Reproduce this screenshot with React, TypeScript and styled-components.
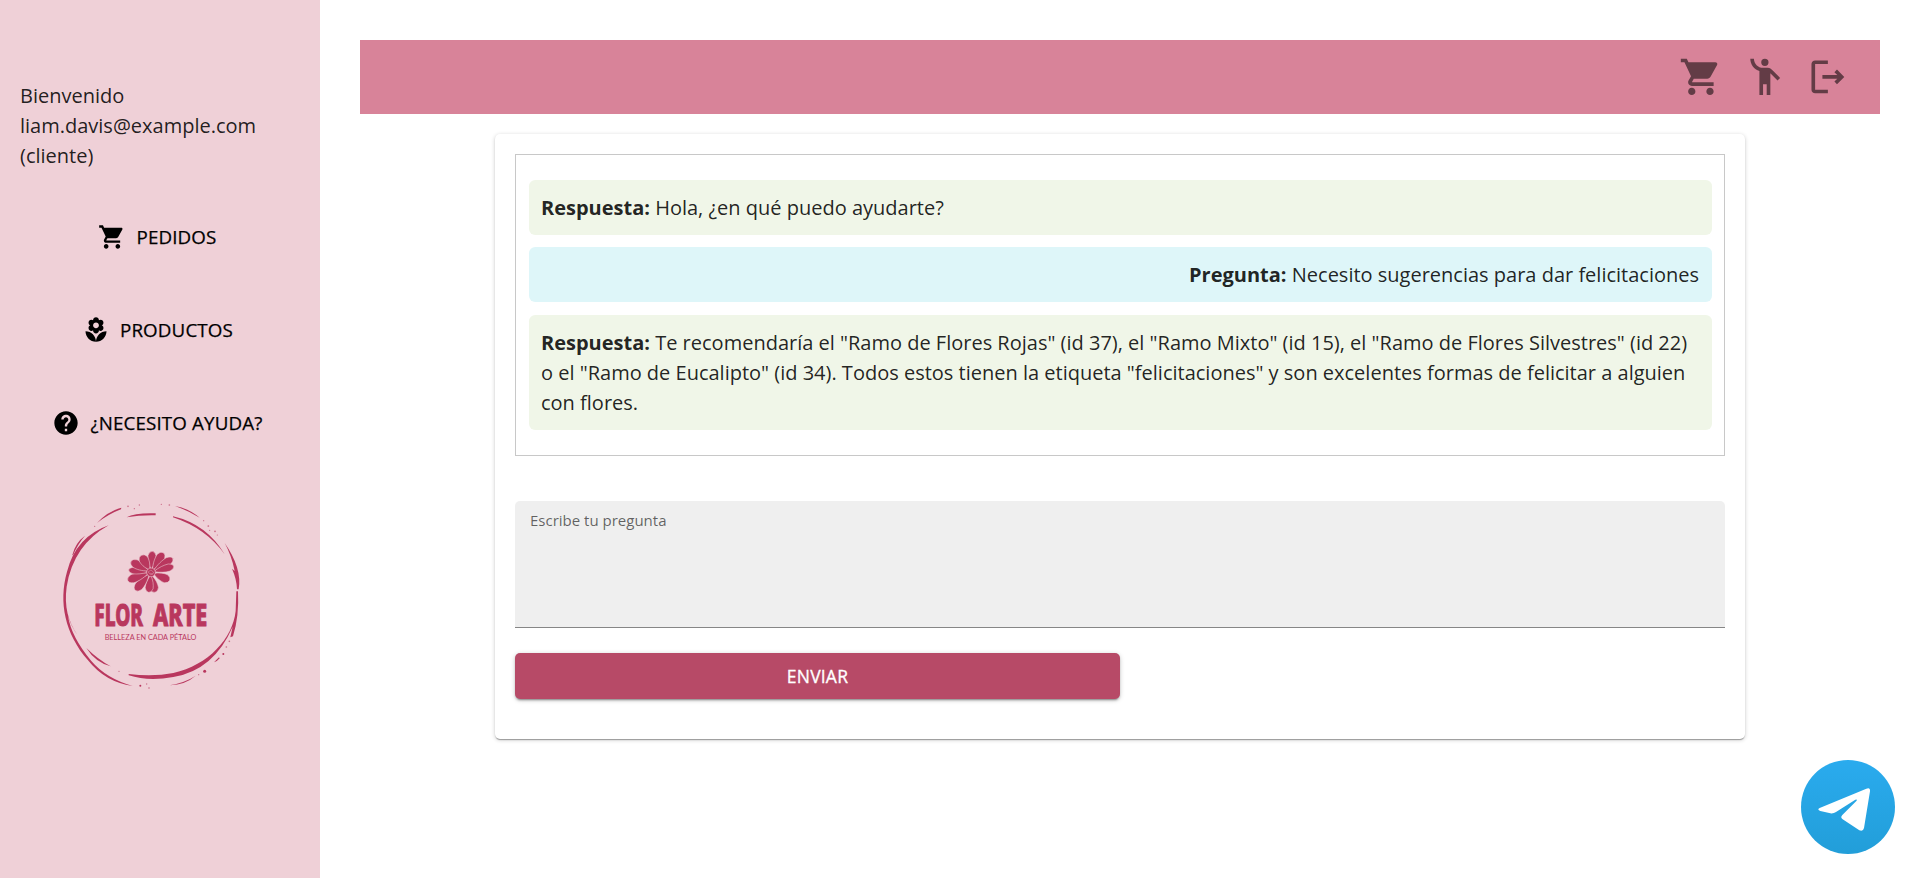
import React from "react";
import styled, { createGlobalStyle } from "styled-components";

const GlobalStyle = createGlobalStyle`
  * { box-sizing: border-box; }
  body {
    margin: 0;
    background: #fff;
    color: rgba(0, 0, 0, 0.87);
    font-family: "Open Sans", "Noto Sans", sans-serif;
    font-size: 20px;
    line-height: 30px;
  }
`;

const Page = styled.div`
  display: flex;
  height: 878px;
  overflow: hidden;
`;

const Sidebar = styled.aside`
  flex: none;
  width: 320px;
  padding: 81px 20px 0;
  background: #efd0d7;
  display: flex;
  flex-direction: column;
`;

const Welcome = styled.p`
  margin: 0 0 35px;
  overflow-wrap: anywhere;
`;

const Nav = styled.nav`
  display: flex;
  flex-direction: column;
  gap: 31px;
`;

const NavButton = styled.button`
  display: flex;
  align-items: center;
  justify-content: center;
  height: 62px;
  padding: 0 5px 1px 0;
  border: 0;
  background: none;
  color: #000;
  font: 500 18.75px/30px "Open Sans", sans-serif;
  letter-spacing: 0.15px;
  -webkit-text-stroke: 0.25px currentColor;
  text-transform: uppercase;
  svg { margin-right: 10px; }
`;

const LogoImage = styled.svg`
  flex: none;
  display: block;
  width: 200px;
  height: 210px;
  margin: 36px 0 0 30px;
`;

const Main = styled.main`
  flex: 1;
  padding: 40px;
  display: flex;
  flex-direction: column;
  align-items: center;
`;

const TopBar = styled.header`
  width: 100%;
  height: 74px;
  padding-right: 20px;
  display: flex;
  flex: none;
  align-items: center;
  justify-content: flex-end;
  background: #d88399;
`;

const IconButton = styled.button`
  display: flex;
  padding: 10px;
  border: 0;
  background: none;
  color: rgba(0, 0, 0, 0.54);
`;

const Icon = styled.svg<{ $size: number }>`
  flex: none;
  display: block;
  width: ${(p) => p.$size}px;
  height: ${(p) => p.$size}px;
  fill: currentColor;
`;

const Card = styled.section`
  width: 1250px;
  height: 605px;
  margin-top: 20px;
  padding: 20px;
  border-radius: 5px;
  background: #fff;
  box-shadow: 0 2px 1px -1px rgba(0, 0, 0, 0.2), 0 1px 1px rgba(0, 0, 0, 0.14),
    0 1px 4px rgba(0, 0, 0, 0.2);
`;

const Conversation = styled.div`
  display: flex;
  flex-direction: column;
  padding: 25px 12.5px;
  border: 1px solid #c8c8c8;
`;

const Message = styled.div<{ $own?: boolean }>`
  padding: 12.5px;
  border-radius: 6.25px;
  background: ${(p) => (p.$own ? "#def6f9" : "#f0f6e8")};
  text-align: ${(p) => (p.$own ? "right" : "left")};
  margin-bottom: ${(p) => (p.$own ? 13 : 12)}px;
  &:last-child { margin-bottom: 0; }
`;

const Field = styled.label`
  display: block;
  height: 127px;
  margin-top: 45px;
  padding: 4px 15px;
  border-bottom: 1px solid #868686;
  border-radius: 5px 5px 0 0;
  background: #efefef;
  color: rgba(0, 0, 0, 0.6);
  font-size: 15px;
`;

const SendButton = styled.button`
  display: block;
  width: 605px;
  height: 46px;
  margin-top: 25px;
  padding: 0;
  border: 0;
  border-radius: 5px;
  background: #b74a67;
  color: #fff;
  font: 500 17.5px/30px "Open Sans", sans-serif;
  letter-spacing: 0.2px;
  -webkit-text-stroke: 0.3px currentColor;
  box-shadow: 0 3px 1px -2px rgba(0, 0, 0, 0.2), 0 2px 2px rgba(0, 0, 0, 0.14),
    0 1px 5px rgba(0, 0, 0, 0.2);
`;

const TelegramLink = styled.a`
  position: fixed;
  right: 25px;
  bottom: 24px;
  svg { display: block; }
`;

const ICONS = {
  cart: "M7 18c-1.1 0-1.99.9-1.99 2S5.9 22 7 22s2-.9 2-2-.9-2-2-2zM1 2v2h2l3.6 7.59-1.35 2.45c-.16.28-.25.61-.25.96 0 1.1.9 2 2 2h12v-2H7.42c-.14 0-.25-.11-.25-.25l.03-.12.9-1.63h7.45c.75 0 1.41-.41 1.75-1.03l3.58-6.49c.08-.14.12-.31.12-.48 0-.55-.45-1-1-1H5.21l-.94-2H1zm16 16c-1.1 0-1.99.9-1.99 2s.89 2 1.99 2 2-.9 2-2-.9-2-2-2z",
  flower:
    "M12 22c4.97 0 9-4.03 9-9-4.97 0-9 4.03-9 9zM5.6 10.25c0 1.38 1.12 2.5 2.5 2.5.53 0 1.01-.16 1.42-.44l-.02.19c0 1.38 1.12 2.5 2.5 2.5s2.5-1.12 2.5-2.5l-.02-.19c.4.28.89.44 1.42.44 1.38 0 2.5-1.12 2.5-2.5 0-1-.59-1.85-1.43-2.25.84-.4 1.43-1.25 1.43-2.25 0-1.38-1.12-2.5-2.5-2.5-.53 0-1.01.16-1.42.44l.02-.19C14.5 2.12 13.38 1 12 1S9.5 2.12 9.5 3.5l.02.19c-.4-.28-.89-.44-1.42-.44-1.38 0-2.5 1.12-2.5 2.5 0 1 .59 1.85 1.43 2.25-.84.4-1.43 1.25-1.43 2.25zM12 5.5c1.38 0 2.5 1.12 2.5 2.5s-1.12 2.5-2.5 2.5S9.5 9.38 9.5 8s1.12-2.5 2.5-2.5zM3 13c0 4.97 4.03 9 9 9 0-4.97-4.03-9-9-9z",
  help: "M12 2C6.48 2 2 6.48 2 12s4.48 10 10 10 10-4.48 10-10S17.52 2 12 2zm1 17h-2v-2h2v2zm2.07-7.75-.9.92C13.45 12.9 13 13.5 13 15h-2v-.5c0-1.1.45-2.1 1.17-2.83l1.24-1.26c.37-.36.59-.86.59-1.41 0-1.1-.9-2-2-2s-2 .9-2 2H8c0-2.21 1.79-4 4-4s4 1.79 4 4c0 .88-.36 1.68-.93 2.25z",
  person:
    "M12 2a2 2 0 1 0 0 4 2 2 0 1 0 0-4zM15.89 8.11C15.5 7.72 14.83 7 13.53 7h-2.54C8.24 6.99 6 4.75 6 2H4c0 3.16 2.11 5.84 5 6.71V22h2v-6h2v6h2V10.05L18.95 14l1.41-1.41-4.47-4.48z",
  logout:
    "m17 8-1.41 1.41L17.17 11H9v2h8.17l-1.58 1.58L17 16l4-4-4-4zM5 5h7V3H5c-1.1 0-2 .9-2 2v14c0 1.1.9 2 2 2h7v-2H5V5z",
};

const Glyph = ({ name, size }: { name: keyof typeof ICONS; size: number }) => (
  <Icon viewBox="0 0 24 24" $size={size} aria-hidden>
    <path d={ICONS[name]} />
  </Icon>
);

const LogoTitle = styled.text`
  font: 800 92px "Noto Sans", sans-serif;
`;

const LogoTagline = styled.text`
  font: 400 22px Lato, sans-serif;
`;

const DOTS: [number, number, number][] = [
  [234, 49, 2.5], [253, 56, 2], [268, 45, 2], [334, 43, 2], [358, 45, 2.5], [134, 109, 2],
  [461, 92, 1.8], [475, 108, 2.6], [479, 121, 1.8], [495, 124, 2.6], [502, 135, 1.8],
  [538, 454, 2.5], [529, 471, 2.5], [520, 492, 3], [464, 544, 4.5], [446, 554, 2],
  [207, 544, 2], [271, 587, 3], [290, 582, 2], [297, 594, 2.5],
];

/* tip of each petal and its half width */
const CENTER = { x: 303, y: 247 };
const PETALS: [number, number, number][] = [
  [307, 184, 12], [340, 188, 13], [368, 205, 12], [371, 229, 11], [359, 271, 13],
  [315, 307, 13], [296, 307, 12], [256, 301, 13], [233, 271, 13], [236, 240, 10],
  [243, 214, 13], [274, 196, 14],
];

const Petal = ({ tip: [x, y, w] }: { tip: [number, number, number] }) => {
  const dx = x - CENTER.x;
  const dy = y - CENTER.y;
  const length = Math.hypot(dx, dy);
  const angle = (Math.atan2(dy, dx) * 180) / Math.PI;
  return (
    <path
      transform={`translate(${CENTER.x} ${CENTER.y}) rotate(${angle})`}
      d={`M8 0C${length * 0.4} ${-w * 0.8} ${length * 0.6} ${-w} ${length * 0.8} ${-w}Q${length} ${-w * 0.7} ${length} 0Q${length} ${w * 0.7} ${length * 0.8} ${w}C${length * 0.6} ${w} ${length * 0.4} ${w * 0.8} 8 0Z`}
      stroke="#efd0d7"
      strokeWidth="1.5"
    />
  );
};

const Logo = () => (
  <LogoImage viewBox="0 0 600 630" fill="#b9375e" role="img" aria-label="Flor Arte">
    <path d="M141 99Q173 64 214 53L213 58Q176 72 141 99Z" />
    <path d="M230 82Q255 68 317 70V76Q270 75 230 82Z" />
    <path d="M375 48Q414 54 449 83Q413 61 375 48Z" />
    <path d="M369 79Q469 102 524 193Q468 115 369 82Z" />
    <path d="M67 195Q76 158 105 137Q82 164 69 196Z" />
    <path d="M176 106Q70 165 50 290C42 350 55 395 82 434Q65 413 54 378Q64 441 124 513Q168 565 248 588Q166 577 114 511C45 430 25 338 51 245Q78 140 176 106Z" />
    <path d="M524 159Q577 235 566 298H561Q560 267 546 236L554 243Q545 197 524 159Z" />
    <path d="M559 304H564Q568 378 549 439L541 442L548 410Q492 540 370 561Q295 575 236 556V552Q310 561 370 549C475 525 548 446 557 363Z" />
    <path d="M109 474Q145 509 182 529Q136 517 109 474Z" />
    <path d="M359 586Q407 577 437 557Q407 584 359 586Z" />
    <path d="M492 517L507 502L509 505Q501 515 492 517Z" />
    {DOTS.map(([x, y, r]) => (
      <circle key={`${x}-${y}`} cx={x} cy={y} r={r} opacity={r < 2.7 ? 0.65 : 1} />
    ))}
    {PETALS.map((tip) => (
      <Petal key={tip.join()} tip={tip} />
    ))}
    <circle cx="303" cy="247" r="13" stroke="#efd0d7" strokeWidth="1.5" />
    <path d="M294 246L303 240L312 248L302 255ZM299 249L309 253" fill="none" stroke="#efd0d7" strokeWidth="1" />
    <LogoTitle x="133" y="409" textLength="146" lengthAdjust="spacingAndGlyphs" stroke="#b9375e" strokeWidth="3">
      FLOR
    </LogoTitle>
    <LogoTitle x="309" y="409" textLength="163" lengthAdjust="spacingAndGlyphs" stroke="#b9375e" strokeWidth="3">
      ARTE
    </LogoTitle>
    <LogoTagline x="164" y="449" textLength="275" lengthAdjust="spacingAndGlyphs">
      BELLEZA EN CADA PÉTALO
    </LogoTagline>
  </LogoImage>
);

export default function App() {
  return (
    <>
      <GlobalStyle />
      <Page>
        <Sidebar>
          <Welcome>Bienvenido liam.davis@example.com (cliente)</Welcome>
          <Nav>
            <NavButton><Glyph name="cart" size={28} />Pedidos</NavButton>
            <NavButton><Glyph name="flower" size={28} />Productos</NavButton>
            <NavButton><Glyph name="help" size={28} />¿Necesito ayuda?</NavButton>
          </Nav>
          <Logo />
        </Sidebar>
        <Main>
          <TopBar>
            <IconButton aria-label="Carrito"><Glyph name="cart" size={43.75} /></IconButton>
            <IconButton aria-label="Perfil"><Glyph name="person" size={43.75} /></IconButton>
            <IconButton aria-label="Salir"><Glyph name="logout" size={43.75} /></IconButton>
          </TopBar>
          <Card>
            <Conversation>
              <Message><strong>Respuesta:</strong> Hola, ¿en qué puedo ayudarte?</Message>
              <Message $own><strong>Pregunta:</strong> Necesito sugerencias para dar felicitaciones</Message>
              <Message>
                <strong>Respuesta:</strong> Te recomendaría el "Ramo de Flores Rojas" (id 37), el "Ramo Mixto"
                (id 15), el "Ramo de Flores Silvestres" (id 22) o el "Ramo de Eucalipto" (id 34). Todos estos
                tienen la etiqueta "felicitaciones" y son excelentes formas de felicitar a alguien con flores.
              </Message>
            </Conversation>
            <Field>Escribe tu pregunta</Field>
            <SendButton>ENVIAR</SendButton>
          </Card>
        </Main>
        <TelegramLink aria-label="Telegram">
          <svg width="94" height="94" viewBox="0 0 282 282">
            <defs>
              <linearGradient id="sky" x1="0" y1="0" x2="0" y2="1">
                <stop offset="0" stopColor="#2aabee" />
                <stop offset="1" stopColor="#229ed9" />
              </linearGradient>
            </defs>
            <circle cx="141" cy="141" r="141" fill="url(#sky)" />
            <path
              d="M56 144L196 86Q208 81 207 94L189 204Q186 216 175 211L125 178Q117 172 124 165L166 123Q171 117 163 119L105 156Q98 161 88 160L58 153Q47 149 56 144Z"
              fill="#fff"
            />
          </svg>
        </TelegramLink>
      </Page>
    </>
  );
}
